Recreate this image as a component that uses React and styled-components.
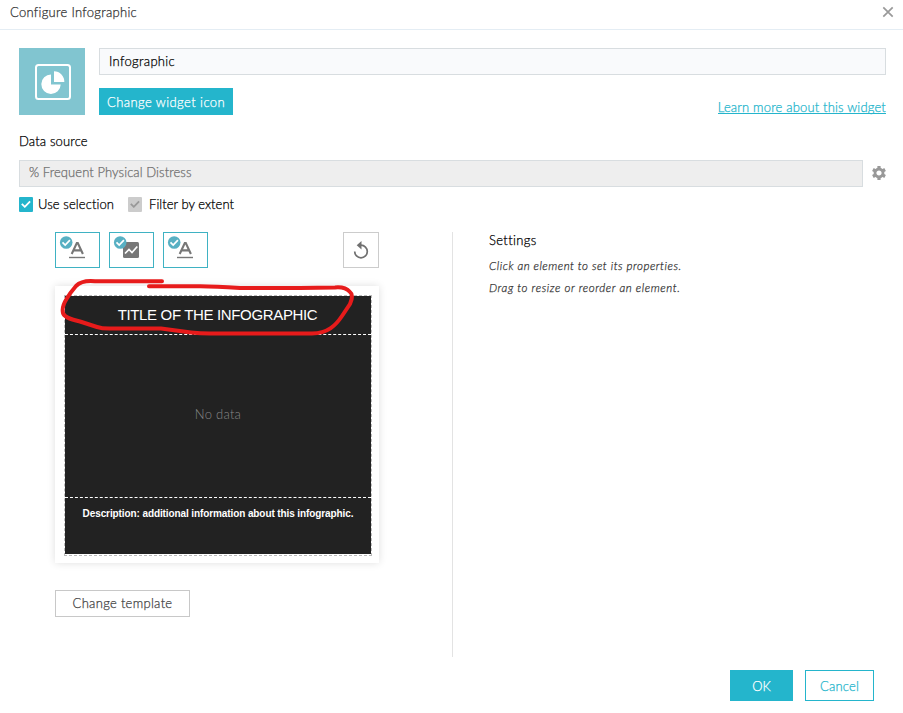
import React from "react";
import styled, { createGlobalStyle } from "styled-components";

const Global = createGlobalStyle`
  * { box-sizing: border-box; }
  body { margin: 0; background: #fff; }
`;

const Dialog = styled.main`
  width: 903px;
  height: 713px;
  overflow: hidden;
  display: flex;
  flex-direction: column;
  font-family: Lato, "Open Sans", sans-serif;
  font-size: 13px;
  font-weight: 300;
  line-height: 18px;
  color: #000;
  white-space: nowrap;
`;

const Label = styled.span`
  letter-spacing: ${(p) => p.$track || 0}px;
  -webkit-text-stroke: 0.25px currentColor;
`;

const Header = styled.header`
  height: 30px;
  flex: none;
  display: flex;
  justify-content: space-between;
  padding: 3px 9px 0 10px;
  color: #333;
  border-bottom: 1px solid #e4edf4;
`;

const CloseIcon = styled.svg`
  width: 12px;
  height: 12px;
  margin-top: 3px;
`;

const Summary = styled.section`
  display: grid;
  grid-template-columns: 66px 787px;
  column-gap: 14px;
  padding: 18px 0 0 19px;
`;

const WidgetIcon = styled.div`
  width: 66px;
  height: 67px;
  background: #81c5d0;
  display: flex;
  align-items: center;
  justify-content: center;
  padding: 1px 0 0 2px;
`;

const SummaryFields = styled.div`
  display: flex;
  flex-direction: column;
  gap: 13px;
`;

const Field = styled.div`
  height: 27px;
  width: ${(p) => p.$width}px;
  border: 1px solid #d8dde0;
  background: ${(p) => (p.$disabled ? "#eee" : "#f9fafc")};
  color: ${(p) => (p.$disabled ? "#707070" : "#000")};
  padding: ${(p) => (p.$disabled ? 2 : 3)}px 9px;
`;

const Line = styled.div`
  display: flex;
  justify-content: space-between;
`;

const Button = styled.button`
  height: ${(p) => p.$height || 27}px;
  width: ${(p) => p.$width}px;
  padding: 0 0 ${(p) => p.$lift || 0}px;
  border: 1px solid ${(p) => p.$edge || "#24b5cc"};
  background: ${(p) => (p.$solid ? "#24b5cc" : "#fff")};
  color: ${(p) => p.$color || "#fff"};
  font: inherit;
  display: flex;
  align-items: center;
  justify-content: center;
`;

const HelpLink = styled.a`
  height: 16px;
  margin-top: 10px;
  line-height: 19px;
  color: #24b5cc;
  border-bottom: 1px solid #24b5cc;
`;

const DataSource = styled.section`
  padding: 17px 0 0 19px;
`;

const SourceRow = styled.div`
  display: flex;
  align-items: center;
  gap: 9px;
  margin-top: 10px;
`;

const GearIcon = styled.svg`
  width: 14px;
  height: 14px;
  margin-bottom: 1px;
`;

const Options = styled.div`
  display: flex;
  gap: 14px;
  margin-top: 8px;
`;

const Option = styled.label`
  display: flex;
  align-items: center;
  gap: ${(p) => p.$gap}px;
`;

const CheckBox = styled.span`
  width: 14px;
  height: 15px;
  border-radius: 1px;
  background: ${(p) => (p.$muted ? "#ccc" : "#24b5cc")};
  display: flex;
  align-items: center;
  justify-content: center;
`;

const Workspace = styled.section`
  display: flex;
  height: 425px;
  margin: 19px 0 0 55px;
`;

const Editor = styled.div`
  width: 398px;
  border-right: 1px solid #e3e3e3;
`;

const Toolbar = styled.div`
  width: 324px;
  display: flex;
  gap: 9px;
`;

const Tool = styled.button`
  width: 45px;
  height: 36px;
  padding: 0;
  border: 1px solid #3fb2c3;
  background: #fff;
`;

const ResetTool = styled(Tool)`
  width: 36px;
  margin-left: auto;
  border-color: #ccc;
`;

const ToolArt = styled.svg`
  display: block;
`;

const Card = styled.div`
  position: relative;
  width: 324px;
  height: 277px;
  margin: 18px 0 27px;
  padding: 9px 7px 7px 9px;
  box-shadow: 0 0 8px rgba(0, 0, 0, 0.13);
`;

const Frame = styled.div`
  width: 308px;
  height: 261px;
  border: 1px dashed #bbb;
  padding-bottom: 1px;
`;

const Panel = styled.div`
  height: ${(p) => p.$height}px;
  background: #222;
  border-bottom: ${(p) => (p.$last ? "none" : "1px dashed #fff")};
  display: flex;
  justify-content: center;
`;

const InfographicTitle = styled.span`
  font: 15px/20px "Liberation Sans", Arial, sans-serif;
  letter-spacing: -0.35px;
  color: #fff;
  margin: 9px 1px 0 0;
`;

const NoData = styled.span`
  color: #888;
  letter-spacing: 0.25px;
  margin-top: 70px;
`;

const Description = styled.span`
  font: bold 10px/14px "Liberation Sans", Arial, sans-serif;
  letter-spacing: -0.1px;
  color: #fff;
  margin-top: 9px;
`;

const Annotation = styled.svg`
  position: absolute;
  left: 0;
  top: -10px;
  overflow: visible;
  pointer-events: none;
`;

const Settings = styled.aside`
  padding-left: 36px;
`;

const SettingsTitle = styled.h2`
  font: inherit;
  margin: -1px 0 6px;
`;

const Hint = styled.p`
  margin: 0;
  font-size: 11.5px;
  font-style: italic;
  line-height: 22px;
  color: #333;
`;

const Footer = styled.footer`
  display: flex;
  justify-content: flex-end;
  gap: 12px;
  padding: 13px 29px 0 0;
`;

const Tick = ({ color = "#fff" }) => (
  <svg width="10" height="8" viewBox="0 0 10 8">
    <path d="M0.8 3.8l3 3 5.3-5.5" fill="none" stroke={color} strokeWidth="1.8" />
  </svg>
);

const Badge = () => (
  <g>
    <circle cx="10.2" cy="9.5" r="6.3" fill="#58b0c3" />
    <path d="M6.5 9.3l2.7 2.8 4.7-5" fill="none" stroke="#fff" strokeWidth="1.7" />
  </g>
);

const TextTool = () => (
  <Tool aria-label="Text">
    <ToolArt width="43" height="34">
      <path d="M15.7 21L20.8 10H21.8L26.9 21M17.6 17.4H25" fill="none" stroke="#777" strokeWidth="2.1" />
      <path d="M13 24.5H29" stroke="#777" strokeWidth="1.4" />
      <Badge />
    </ToolArt>
  </Tool>
);

const ChartTool = () => (
  <Tool aria-label="Chart">
    <ToolArt width="43" height="34">
      <rect x="13" y="9" width="16" height="16" rx="1.5" fill="#777" />
      <path d="M15 20.5L19 16.5L22 19.5L27.3 13.5" fill="none" stroke="#fff" strokeWidth="1.7" />
      <Badge />
    </ToolArt>
  </Tool>
);

export default function App() {
  return (
    <Dialog>
      <Global />
      <Header>
        <Label $track={0.28}>Configure Infographic</Label>
        <CloseIcon viewBox="0 0 12 12">
          <path d="M1.3 1.3l9.4 9.4M10.7 1.3l-9.4 9.4" stroke="#999" strokeWidth="1.7" />
        </CloseIcon>
      </Header>
      <Summary>
        <WidgetIcon>
          <svg width="36" height="36">
            <rect x="1" y="1" width="34" height="34" rx="2.5" fill="none" stroke="#fff" strokeWidth="2" />
            <path d="M16 10.5A9.7 9.7 0 1 0 25.7 20.5H16Z" fill="#fff" />
            <path d="M19 7.3A10.3 10.3 0 0 1 29.3 18H19Z" fill="#fff" />
          </svg>
        </WidgetIcon>
        <SummaryFields>
          <Field $width={787}><Label $track={0.32}>Infographic</Label></Field>
          <Line>
            <Button $solid $width={134}><Label $track={0.42}>Change widget icon</Label></Button>
            <HelpLink><Label $track={0.17}>Learn more about this widget</Label></HelpLink>
          </Line>
        </SummaryFields>
      </Summary>
      <DataSource>
        <Label $track={0.15}>Data source</Label>
        <SourceRow>
          <Field $disabled $width={844}><Label $track={0.08}>% Frequent Physical Distress</Label></Field>
          <GearIcon viewBox="-7 -7 14 14">
            <circle r="4" fill="none" stroke="#999" strokeWidth="2.8" />
            <path d="M0-7V-4M0 7V4M-6.1-3.5L-3.5-2M6.1 3.5L3.5 2M-6.1 3.5L-3.5 2M6.1-3.5L3.5-2" stroke="#999" strokeWidth="3.2" />
          </GearIcon>
        </SourceRow>
        <Options>
          <Option $gap={5}><CheckBox><Tick /></CheckBox><Label $track={0.1}>Use selection</Label></Option>
          <Option $gap={7}><CheckBox $muted><Tick color="#999" /></CheckBox><Label $track={0.03}>Filter by extent</Label></Option>
        </Options>
      </DataSource>
      <Workspace>
        <Editor>
          <Toolbar>
            <TextTool />
            <ChartTool />
            <TextTool />
            <ResetTool aria-label="Reset">
              <ToolArt width="34" height="34">
                <path d="M17 12.2A6.3 6.3 0 1 1 10.7 18.5" fill="none" stroke="#707070" strokeWidth="1.7" />
                <path d="M17.5 8V16.5L12.7 12.2Z" fill="#707070" />
              </ToolArt>
            </ResetTool>
          </Toolbar>
          <Card>
            <Frame>
              <Panel $height={39}><InfographicTitle>TITLE OF THE INFOGRAPHIC</InfographicTitle></Panel>
              <Panel $height={163}><NoData>No data</NoData></Panel>
              <Panel $height={56} $last><Description>Description: additional information about this infographic.</Description></Panel>
            </Frame>
            <Annotation width="324" height="70">
              <path
                d="M107 5.3H40Q27 4 21 10Q15 17 11.5 23Q6.5 31 8 37Q9 42 25 45.5L42 51Q48 53 58 52.500H106L136 56.5Q145 57.5 155 57.5H257C273 57.5 281 49 287 40L295 28Q299 19 295 16Q290 10.500 280 11.5L245 12H185C150 10 145 10 94 10.3"
                fill="none"
                stroke="#e71b1b"
                strokeWidth="4"
                strokeLinecap="round"
                strokeLinejoin="round"
              />
            </Annotation>
          </Card>
          <Button $width={135} $lift={1} $edge="#c8c8c8" $color="#444"><Label $track={0.3}>Change template</Label></Button>
        </Editor>
        <Settings>
          <SettingsTitle><Label $track={0.35}>Settings</Label></SettingsTitle>
          <Hint><Label $track={0.52}>Click an element to set its properties.</Label></Hint>
          <Hint><Label $track={0.6}>Drag to resize or reorder an element.</Label></Hint>
        </Settings>
      </Workspace>
      <Footer>
        <Button $solid $width={63} $height={31}><Label>OK</Label></Button>
        <Button $width={69} $height={31} $color="#24b5cc"><Label $track={0.2}>Cancel</Label></Button>
      </Footer>
    </Dialog>
  );
}
